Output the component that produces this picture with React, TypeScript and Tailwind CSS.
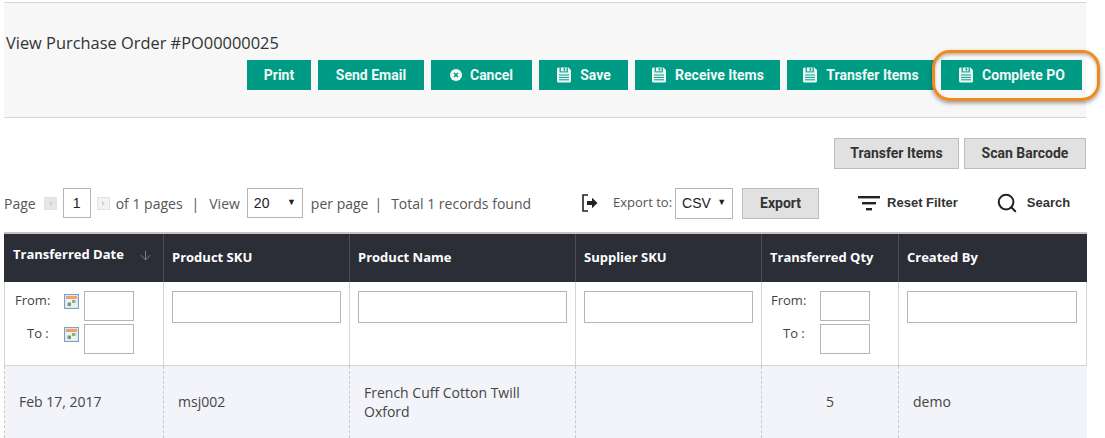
import { ArrowDown, Search } from "lucide-react";
import type { ReactNode } from "react";

const openSans = "font-['Open_Sans',sans-serif]";
const arial = "font-['Liberation_Sans',Arial,sans-serif]";
const roboto = "font-['Roboto',Arial,sans-serif]";

function SaveIcon() {
    return (
        <svg width="16" height="16" viewBox="0 0 16 16" className="shrink-0" fill="none">
            <path d="M1 2 A1.5 1.5 0 0 1 2.5 0.5 H12.5 L15 3 V14 A1.5 1.5 0 0 1 13.5 15.5 H2.5 A1.5 1.5 0 0 1 1 14 Z" fill="#eef9f6" />
            <rect x="3.6" y="0" width="1.2" height="5.4" fill="#009b84" />
            <rect x="4.8" y="4.4" width="6" height="1" fill="#009b84" />
            <rect x="10.6" y="0.6" width="1.2" height="4.8" fill="#009b84" />
            <rect x="7.6" y="1.2" width="1.6" height="2.4" fill="#009b84" />
            <path d="M3 8 H13 M3 10.4 H13 M3 12.8 H13" stroke="#009b84" strokeWidth="1" />
        </svg>
    );
}

function CancelIcon() {
    return (
        <svg width="12" height="12" viewBox="0 0 12 12" className="shrink-0">
            <circle cx="6" cy="6" r="6" fill="#f2f7f6" />
            <path d="M4 4 L8 8 M8 4 L4 8" stroke="#009b84" strokeWidth="1.5" />
        </svg>
    );
}

function CalendarIcon() {
    return (
        <svg width="15" height="15" viewBox="0 0 15 15" className="shrink-0">
            <rect x="0.5" y="0.5" width="14" height="14" fill="#dce6f2" stroke="#7f9fc6" />
            <rect x="2" y="2" width="11" height="3" fill="#f3a160" />
            <rect x="2" y="5" width="11" height="8" fill="#eef1ee" />
            <rect x="3.5" y="8.5" width="3.5" height="3.5" fill="#6f9d7c" />
            <rect x="8" y="6" width="3.5" height="3" fill="#8cae90" />
        </svg>
    );
}

function PagerArrow({ dir, tone }: { dir: "left" | "right"; tone: string }) {
    return (
        <svg width="13" height="13" viewBox="0 0 13 13" className="shrink-0">
            <rect x="0.5" y="0.5" width="12" height="12" fill={tone} stroke="#e2e2e2" />
            <path d={dir === "left" ? "M8 4 L5 6.5 L8 9 Z" : "M5 4 L8 6.5 L5 9 Z"} fill="#cfcfcf" />
        </svg>
    );
}

function ExportIcon() {
    return (
        <svg width="16" height="18" viewBox="0 0 16 18" fill="none">
            <path d="M6 1 H1 V17 H6" stroke="#222" strokeWidth="1.6" />
            <path d="M5 7 H10 V3.8 L15.5 9 L10 14.2 V11 H5 Z" fill="#222" />
        </svg>
    );
}

function FilterIcon() {
    return (
        <svg width="22" height="16" viewBox="0 0 22 16">
            <rect x="0" y="1" width="22" height="2.4" fill="#222" />
            <rect x="4" y="7" width="14" height="2.4" fill="#222" />
            <rect x="8" y="13" width="6" height="2.4" fill="#222" />
        </svg>
    );
}

function GreenButton({ width, icon, children }: { width: string; icon?: ReactNode; children: ReactNode }) {
    return (
        <button className={`${width} ${roboto} h-[30px] bg-[#009b84] text-[#eef8f6] text-[14px] font-bold flex items-center justify-center gap-[8px]`}>
            {icon}
            {children}
        </button>
    );
}

function GrayButton({ className, children }: { className: string; children: ReactNode }) {
    return (
        <button className={`${className} ${roboto} h-[31px] bg-[#e1e1e1] border border-[#bdbdbd] text-[#333] text-[14px] font-bold`}>
            {children}
        </button>
    );
}

function FilterInput({ className }: { className: string }) {
    return <input className={`${className} block bg-white border border-[#b5b5b5]`} />;
}

function RangeFilter({ withCalendar }: { withCalendar?: boolean }) {
    return (
        <div className="flex flex-col gap-[3px]">
            {["From:", "To :"].map((label) => (
                <div key={label} className="flex items-start">
                    <span className={`w-[49px] text-[13px] leading-[18px] ${label === "To :" ? "pl-[12px]" : ""}`}>
                        {label}
                    </span>
                    {withCalendar && (
                        <span className="w-[20px] pt-[3px]">
                            <CalendarIcon />
                        </span>
                    )}
                    <FilterInput className="w-[50px] h-[30px]" />
                </div>
            ))}
        </div>
    );
}

const headCell = "border-l border-[#4b4e57] px-[8px] text-left font-bold text-[13px] text-white align-middle";
const filterCell = "border-l border-[#d5d5d5] px-[8px] pt-[9px] align-top";
const dataCell = "border-l border-dashed border-[#c9c9c9] px-[14px] align-middle";

export default function App() {
    return (
        <div className={`${openSans} w-[1105px] h-[438px] overflow-hidden bg-white text-[#444] pt-[2px] relative`}>
            {/* Top panel */}
            <div className="ml-[4px] w-[1082px] h-[116px] bg-[#f7f7f7] border-y border-[#d6d6d6] pt-[30px]">
                <h1 className="pl-[2px] text-[16.4px] leading-[20px] text-[#333]">View Purchase Order #PO00000025</h1>
                <div className="flex justify-end gap-[7px] pr-[4px] mt-[7px]">
                    <GreenButton width="w-[64px]">Print</GreenButton>
                    <GreenButton width="w-[106px]">Send Email</GreenButton>
                    <GreenButton width="w-[101px]" icon={<CancelIcon />}>Cancel</GreenButton>
                    <GreenButton width="w-[89px]" icon={<SaveIcon />}>Save</GreenButton>
                    <GreenButton width="w-[145px]" icon={<SaveIcon />}>Receive Items</GreenButton>
                    <GreenButton width="w-[147px]" icon={<SaveIcon />}>Transfer Items</GreenButton>
                    <GreenButton width="w-[141px]" icon={<SaveIcon />}>Complete PO</GreenButton>
                </div>
            </div>

            {/* Highlight round the Complete PO button */}
            <div className="absolute left-[932px] top-[50px] w-[168px] h-[51px] rounded-[18px] border-[3px] border-[#f08a1d] shadow-[0_2px_4px_rgba(0,0,0,0.4),inset_0_2px_3px_rgba(0,0,0,0.25)]" />

            <div className="flex justify-end gap-[5px] mt-[20px] pr-[19px]">
                <GrayButton className="w-[125px]">Transfer Items</GrayButton>
                <GrayButton className="w-[122px]">Scan Barcode</GrayButton>
            </div>

            {/* Pager and export row */}
            <div className="flex items-center h-[30px] mt-[19px] pl-[4px] text-[14px] text-[#555]">
                <span>Page</span>
                <span className="ml-[8px] flex"><PagerArrow dir="left" tone="#e6e6e6" /></span>
                <span className={`${arial} w-[28px] h-[30px] ml-[6px] border border-[#b5b5b5] flex items-center justify-center text-[14px] text-[#222]`}>1</span>
                <span className="ml-[6px] flex"><PagerArrow dir="right" tone="#f2f2f2" /></span>
                <span className="ml-[6px]">of 1 pages</span>
                <span className="ml-[9px]">|</span>
                <span className="ml-[10px]">View</span>
                <span className={`${arial} w-[56px] h-[30px] ml-[7px] border border-[#b5b5b5] flex items-center justify-between px-[6px] text-[14px] text-[#222]`}>
                    20<span className="text-[9px]">▼</span>
                </span>
                <span className="ml-[8px]">per page</span>
                <span className="ml-[6px]">|</span>
                <span className="ml-[9px]">Total 1 records found</span>

                <span className="ml-[51px] flex"><ExportIcon /></span>
                <span className="ml-[15px] text-[13px]">Export to:</span>
                <span className={`${arial} w-[58px] h-[31px] ml-[3px] border border-[#b5b5b5] flex items-center justify-between px-[6px] text-[14px] text-[#222]`}>
                    CSV<span className="text-[9px]">▼</span>
                </span>
                <GrayButton className="w-[77px] ml-[9px]">Export</GrayButton>
                <span className="ml-[39px] flex"><FilterIcon /></span>
                <span className={`${arial} ml-[7px] text-[13px] font-bold text-[#333]`}>Reset Filter</span>
                <Search size={22} strokeWidth={2.2} className="ml-[38px] text-[#222]" />
                <span className={`${arial} ml-[9px] text-[13px] font-bold text-[#333]`}>Search</span>
            </div>

            {/* Grid */}
            <table className="ml-[4px] mt-[14px] w-[1082px] table-fixed border-collapse text-[14px]">
                <colgroup>
                    <col className="w-[159px]" />
                    <col className="w-[186px]" />
                    <col className="w-[226px]" />
                    <col className="w-[186px]" />
                    <col className="w-[137px]" />
                    <col className="w-[188px]" />
                </colgroup>
                <thead>
                    <tr className="h-[49px] bg-[#2b2e37] border-t-2 border-[#c4c4c4]">
                        <th className={`${headCell} !border-l-[#2b2e37] pb-[6px]`}>
                            <div className="flex items-center justify-between pr-[2px]">
                                Transferred Date
                                <ArrowDown size={15} strokeWidth={1.6} className="text-[#7d7f85]" />
                            </div>
                        </th>
                        <th className={headCell}>Product SKU</th>
                        <th className={headCell}>Product Name</th>
                        <th className={headCell}>Supplier SKU</th>
                        <th className={headCell}>Transferred Qty</th>
                        <th className={headCell}>Created By</th>
                    </tr>
                </thead>
                <tbody>
                    <tr className="h-[83px] border-b border-[#d5d5d5]">
                        <td className={`${filterCell} pl-[10px]`}>
                            <RangeFilter withCalendar />
                        </td>
                        <td className={filterCell}><FilterInput className="w-[169px] h-[32px]" /></td>
                        <td className={filterCell}><FilterInput className="w-[209px] h-[32px]" /></td>
                        <td className={filterCell}><FilterInput className="w-[169px] h-[32px]" /></td>
                        <td className={`${filterCell} pl-[9px]`}><RangeFilter /></td>
                        <td className={`${filterCell} border-r`}><FilterInput className="w-[170px] h-[32px]" /></td>
                    </tr>
                    <tr className="h-[73px] bg-[#f2f4f9] text-[14px] leading-[19px]">
                        <td className={dataCell}>Feb 17, 2017</td>
                        <td className={dataCell}>msj002</td>
                        <td className={dataCell}>French Cuff Cotton Twill Oxford</td>
                        <td className={dataCell}></td>
                        <td className={`${dataCell} text-center`}>5</td>
                        <td className={dataCell}>demo</td>
                    </tr>
                </tbody>
            </table>
        </div>
    );
}
